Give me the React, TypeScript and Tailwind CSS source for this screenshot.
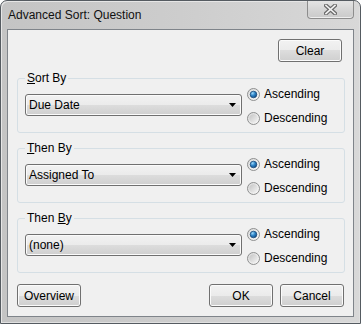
import type { ReactNode } from 'react';

const face =
  'rounded-[3px] border border-[#707070] bg-[linear-gradient(#f2f2f2_0%,#ebebeb_50%,#dddddd_50%,#cfcfcf_100%)] shadow-[inset_0_0_0_1px_#fbfbfb]';

function Radio({ checked }: { checked: boolean }) {
  return (
    <svg width="13" height="13" viewBox="0 0 13 13" className="shrink-0">
      <defs>
        <linearGradient id="rOuter" x1="0" y1="0" x2="1" y2="1">
          <stop offset="0" stopColor="#d9d9d9" />
          <stop offset="1" stopColor="#fafafa" />
        </linearGradient>
        <linearGradient id="rInner" x1="0" y1="0" x2="1" y2="1">
          <stop offset="0" stopColor="#c4c4c4" />
          <stop offset="1" stopColor="#f4f4f4" />
        </linearGradient>
        <radialGradient id="rDot" cx="0.35" cy="0.3" r="0.8">
          <stop offset="0" stopColor="#9fd9fb" />
          <stop offset="0.45" stopColor="#2f86c9" />
          <stop offset="1" stopColor="#0c3f7a" />
        </radialGradient>
      </defs>
      <circle cx="6.5" cy="6.5" r="6" fill="url(#rOuter)" stroke="#8e8f8f" />
      {checked ? (
        <circle cx="6.5" cy="6.5" r="3.3" fill="url(#rDot)" stroke="#1c4a78" strokeWidth="0.8" />
      ) : (
        <circle cx="6.5" cy="6.5" r="4.2" fill="url(#rInner)" />
      )}
    </svg>
  );
}

function SortGroup({ label, value }: { label: ReactNode; value: string }) {
  return (
    <fieldset className="rounded-[3px] border border-[#d5dfe5]">
      <legend className="ml-[7px] h-[16px] px-[2px] leading-[16px]">{label}</legend>
      <div className="flex items-start pb-[6px] pl-[7px]">
        <div className={`mt-[8px] flex h-[22px] w-[217px] items-center ${face}`}>
          <span className="pl-[3px] leading-[16px]">{value}</span>
          <svg width="7" height="4" viewBox="0 0 7 4" className="ml-auto mr-[5px]">
            <polygon points="0,0 7,0 3.5,4" fill="#000" />
          </svg>
        </div>
        <div className="ml-[5px] flex flex-col gap-[8px]">
          <label className="flex h-[16px] items-center gap-[4px]">
            <Radio checked />
            <span>Ascending</span>
          </label>
          <label className="flex h-[16px] items-center gap-[4px]">
            <Radio checked={false} />
            <span>Descending</span>
          </label>
        </div>
      </div>
    </fieldset>
  );
}

function Button({ children, className = '' }: { children: ReactNode; className?: string }) {
  return (
    <button className={`flex h-[23px] w-[64px] items-center justify-center leading-[16px] ${face} ${className}`}>
      {children}
    </button>
  );
}

export default function App() {
  return (
    <div className="h-[324px] w-[361px] bg-white font-['Liberation_Sans',Arial,sans-serif] text-[12px] text-black">
      <div className="flex h-[324px] w-[361px] flex-col rounded-t-[7px] border border-[#555b61] bg-[linear-gradient(90deg,#c4c4c4,#cdcdcd_50%,#d8d8d8)] px-[6px] pb-[6px] shadow-[inset_1px_1px_0_#e6e6e6,inset_-1px_-1px_0_#e0e0e0]">
        {/* title bar */}
        <div className="flex h-[28px] items-start">
          <span className="ml-[1px] mt-[6px] leading-[16px] text-[#111]">Advanced Sort: Question</span>
          <button className="ml-auto flex h-[18px] w-[47px] items-center justify-center rounded-b-[4px] border border-t-0 border-[#8d8d8d] bg-[linear-gradient(#e4e4e4,#d6d6d6_50%,#cacaca)] shadow-[inset_0_-1px_0_#eeeeee]">
            <svg width="13" height="11" viewBox="0 0 13 11">
              <path d="M2 1.5 L11 9.5 M11 1.5 L2 9.5" stroke="#6b6b6b" strokeWidth="4" strokeLinecap="square" />
              <path d="M2 1.5 L11 9.5 M11 1.5 L2 9.5" stroke="#f4f4f4" strokeWidth="1.6" strokeLinecap="square" />
            </svg>
          </button>
        </div>

        {/* client area */}
        <div className="flex flex-1 flex-col border border-[#7f848a] bg-[#f0f0f0] pl-[9px] pr-[8px] pt-[9px]">
          <Button className="mr-[3px] self-end">Clear</Button>

          <div className="mt-[8px]">
            <SortGroup
              label={
                <>
                  <u>S</u>ort By
                </>
              }
              value="Due Date"
            />
          </div>
          <div className="mt-[7px]">
            <SortGroup
              label={
                <>
                  <u>T</u>hen By
                </>
              }
              value="Assigned To"
            />
          </div>
          <div className="mt-[7px]">
            <SortGroup
              label={
                <>
                  Then <u>B</u>y
                </>
              }
              value="(none)"
            />
          </div>

          <div className="mt-[11px] flex items-center pr-[1px]">
            <Button>Overview</Button>
            <Button className="ml-auto">OK</Button>
            <Button className="ml-[7px]">Cancel</Button>
          </div>
        </div>
      </div>
    </div>
  );
}
